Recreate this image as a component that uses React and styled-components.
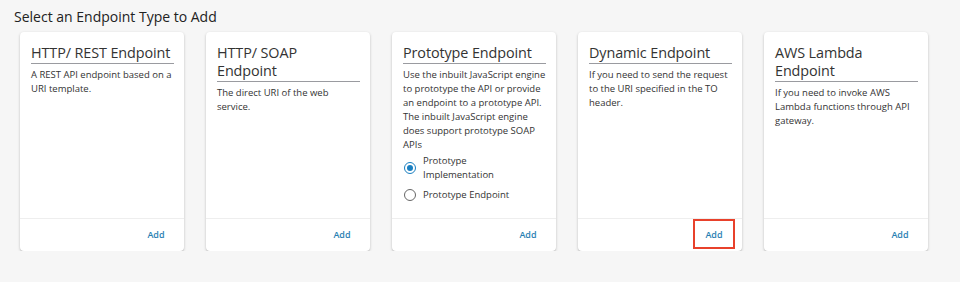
import styled, { createGlobalStyle } from "styled-components";

const GlobalStyle = createGlobalStyle`
    body {
        margin: 0;
        background: #f6f6f6;
        font-family: "Open Sans", "Liberation Sans", sans-serif;
        color: #333;
    }
`;

const endpoints = [
    { title: "HTTP/ REST Endpoint", text: "A REST API endpoint based on a URI template." },
    { title: "HTTP/ SOAP Endpoint", text: "The direct URI of the web service." },
    {
        title: "Prototype Endpoint",
        text: "Use the inbuilt JavaScript engine to prototype the API or provide an endpoint to a prototype API. The inbuilt JavaScript engine does support prototype SOAP APIs",
        options: ["Prototype Implementation", "Prototype Endpoint"],
    },
    {
        title: "Dynamic Endpoint",
        text: "If you need to send the request to the URI specified in the TO header.",
        highlighted: true,
    },
    { title: "AWS Lambda Endpoint", text: "If you need to invoke AWS Lambda functions through API gateway." },
];

const App = () => {
    return (
        <Page>
            <GlobalStyle />
            <Heading>Select an Endpoint Type to Add</Heading>
            <CardRow>
                {endpoints.map((ep) => (
                    <Card key={ep.title}>
                        <CardBody>
                            <CardTitle>{ep.title}</CardTitle>
                            <Description>{ep.text}</Description>
                            {ep.options && (
                                <RadioGroup>
                                    {ep.options.map((opt, i) => (
                                        <RadioRow key={opt}>
                                            <RadioCircle checked={i === 0} />
                                            <RadioLabel>{opt}</RadioLabel>
                                        </RadioRow>
                                    ))}
                                </RadioGroup>
                            )}
                        </CardBody>
                        <CardFooter>
                            <AddButton highlighted={ep.highlighted}>Add</AddButton>
                        </CardFooter>
                    </Card>
                ))}
            </CardRow>
        </Page>
    );
};

const Page = styled.div`
    padding: 7px 14px 0;
`;

const Heading = styled.h1`
    margin: 0 0 5px;
    font-size: 14px;
    line-height: 20px;
    font-weight: 400;
    color: #222;
`;

const CardRow = styled.div`
    display: flex;
    gap: 22px;
    padding-left: 6px;
`;

const Card = styled.div`
    width: 164px;
    height: 219px;
    background: #fff;
    border-radius: 4px;
    box-shadow: 0 1px 3px rgba(0, 0, 0, 0.2), 0 1px 1px rgba(0, 0, 0, 0.1);
    display: flex;
    flex-direction: column;
`;

const CardBody = styled.div`
    flex: 1;
    padding: 12px 10px 0 11px;
`;

const CardTitle = styled.h2`
    margin: 0;
    font-size: 14.4px;
    letter-spacing: -0.1px;
    line-height: 18px;
    font-weight: 400;
    color: #333;
    padding-bottom: 1px;
    border-bottom: 1.5px solid #9a9ba0;
`;

const Description = styled.p`
    margin: 4px 0 0;
    font-size: 9.5px;
    line-height: 14px;
    color: #333;
`;

const RadioGroup = styled.div`
    display: flex;
    flex-direction: column;
    margin-top: -1px;
`;

const RadioRow = styled.label`
    display: flex;
    align-items: center;
    gap: 7px;
    padding: 3px 0;
`;

const RadioCircle = styled.span`
    flex: none;
    width: 12px;
    height: 12px;
    margin-left: 1px;
    box-sizing: border-box;
    border-radius: 50%;
    border: ${(p) => (p.checked ? "1.5px solid #1a7fc1" : "1px solid #666")};
    display: flex;
    align-items: center;
    justify-content: center;

    &::after {
        content: "";
        display: ${(p) => (p.checked ? "block" : "none")};
        width: 6px;
        height: 6px;
        border-radius: 50%;
        background: #1a7fc1;
    }
`;

const RadioLabel = styled.span`
    max-width: 95px;
    font-size: 9.5px;
    line-height: 14px;
    color: #333;
`;

const CardFooter = styled.div`
    height: 33px;
    box-sizing: border-box;
    border-top: 1px solid #eee;
    display: flex;
    justify-content: flex-end;
    align-items: center;
    padding: 0 7px 2px;
`;

const AddButton = styled.button`
    width: 42px;
    height: 30px;
    box-sizing: border-box;
    background: none;
    border: 2px solid ${(p) => (p.highlighted ? "#e8412b" : "transparent")};
    font-family: "Open Sans", "Liberation Sans", sans-serif;
    font-size: 9px;
    font-weight: 600;
    color: #2a7fb3;
    padding: 0;
    cursor: pointer;
`;

export default App;
